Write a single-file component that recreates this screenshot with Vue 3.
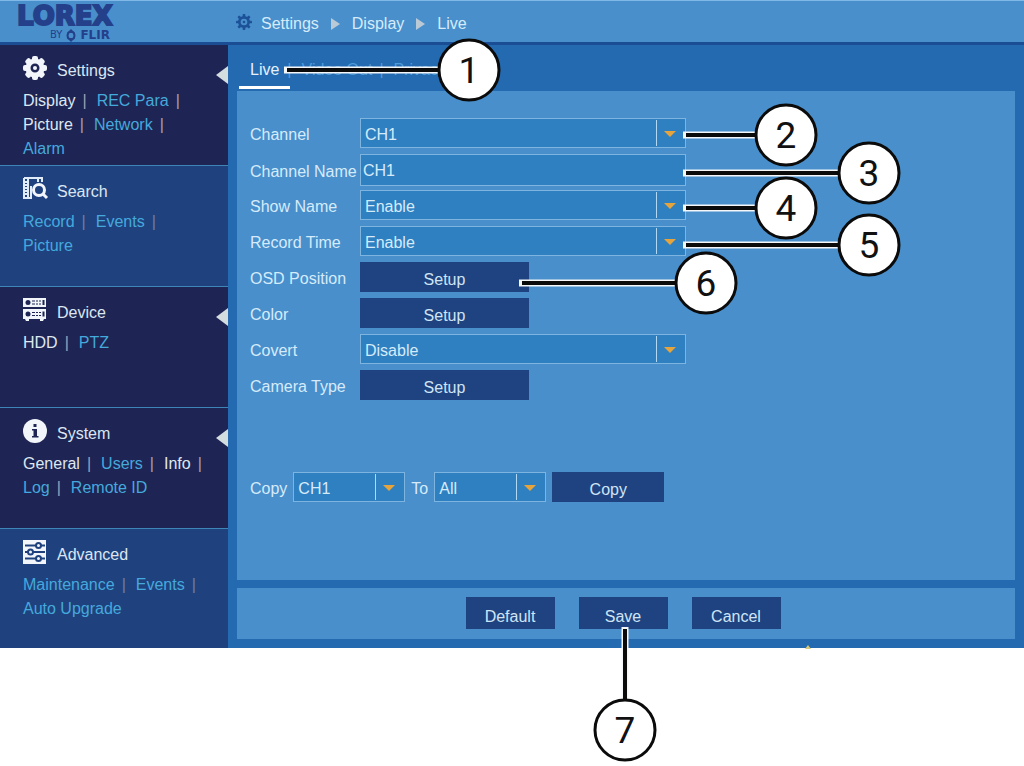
<script setup>
import { ref } from 'vue'

const sections = [
  {
    name: 'Settings', icon: 'gear', dark: true,
    links: [['Display', true], ['REC Para', false], ['Picture', true], ['Network', false], ['Alarm', false]],
  },
  { name: 'Search', icon: 'search', dark: false, links: [['Record', false], ['Events', false], ['Picture', false]] },
  { name: 'Device', icon: 'device', dark: true, links: [['HDD', true], ['PTZ', false]] },
  {
    name: 'System', icon: 'info', dark: true,
    links: [['General', true], ['Users', false], ['Info', true], ['Log', false], ['Remote ID', false]],
  },
  { name: 'Advanced', icon: 'sliders', dark: false, links: [['Maintenance', false], ['Events', false], ['Auto Upgrade', false]] },
]

const rows = [
  { id: 'channel', label: 'Channel', type: 'select', options: ['CH1', 'CH2', 'CH3', 'CH4'] },
  { id: 'channel-name', label: 'Channel Name', type: 'text' },
  { id: 'show-name', label: 'Show Name', type: 'select', options: ['Enable', 'Disable'] },
  { id: 'record-time', label: 'Record Time', type: 'select', options: ['Enable', 'Disable'] },
  { id: 'osd-position', label: 'OSD Position', type: 'button' },
  { id: 'color', label: 'Color', type: 'button' },
  { id: 'covert', label: 'Covert', type: 'select', options: ['Disable', 'Enable'] },
  { id: 'camera-type', label: 'Camera Type', type: 'button' },
]

const channelName = ref('CH1')
const teeth = [0, 45, 90, 135, 180, 225, 270, 315]

const callouts = [
  { n: 1, x: 469, y: 70, fx: 284, fy: 70 },
  { n: 2, x: 786, y: 135, fx: 683, fy: 135 },
  { n: 3, x: 869, y: 173, fx: 683, fy: 173 },
  { n: 4, x: 786, y: 208, fx: 683, fy: 208 },
  { n: 5, x: 869, y: 245, fx: 683, fy: 245 },
  { n: 6, x: 706, y: 283, fx: 519, fy: 283 },
  { n: 7, x: 625, y: 730, fx: 625, fy: 627 },
]
</script>

<template>
  <div class="figure">
    <div class="screen">
      <header class="topbar">
        <div class="brand">
          <div class="brand-name">LOREX</div>
          <div class="brand-sub">
            <span class="by">BY</span>
            <svg class="flir-mark" viewBox="0 0 10 13" aria-hidden="true">
              <path d="M5 0 9 4H1ZM5 13 1 9h8Z" />
              <path d="M3 3Q0 6.500 3 10M7 3q3 3.500 0 7" class="arc" />
            </svg>
            <span class="flir">FLIR</span>
          </div>
        </div>
        <nav class="crumbs" aria-label="Breadcrumb">
          <svg class="crumb-gear" viewBox="0 0 24 24" aria-hidden="true">
            <rect v-for="a in teeth" :key="a" x="10" y="0" width="4" height="6" rx="1" :transform="`rotate(${a} 12 12)`" />
            <circle cx="12" cy="12" r="7" class="ring" />
            <circle cx="12" cy="12" r="2" />
          </svg>
          <a href="#settings">Settings</a>
          <i class="crumb-arrow"></i>
          <a href="#display">Display</a>
          <i class="crumb-arrow"></i>
          <a href="#live">Live</a>
        </nav>
      </header>

      <div class="body">
        <aside class="sidebar">
          <section v-for="s in sections" :key="s.name" class="group" :class="{ dark: s.dark }">
            <h2 class="group-title">
              <svg class="group-icon" viewBox="0 0 24 24" aria-hidden="true">
                <g v-if="s.icon === 'gear'">
                  <rect v-for="a in teeth" :key="a" x="9" y="0" width="6" height="6" rx="2" :transform="`rotate(${a} 12 12)`" />
                  <circle cx="12" cy="12" r="7" class="gear-ring" />
                  <circle cx="12" cy="12" r="2" />
                </g>
                <g v-else-if="s.icon === 'search'">
                  <path class="line" d="M1 1h18v4M1 1v20h8M5 2v19M1 5h4M1 8h4M1 11h4M1 14h4M1 17h4M15 2v3" />
                  <path class="line" d="M8 20v-11" />
                  <circle cx="16" cy="13" r="5.500" class="lens" />
                  <path class="handle" d="m20 17 4 4" />
                </g>
                <g v-else-if="s.icon === 'device'">
                  <path d="M0 0h23v9H0ZM0 11h23v10H0ZM2 21h4v2H3ZM17 21h4l-1 2h-3Z" />
                  <circle cx="5" cy="4.500" r="2.500" class="hole" />
                  <circle cx="5" cy="16" r="2.500" class="hole" />
                  <path class="cut" d="M9 3h3m1 0h2m1 0h2M9 6h3m1 0h2m1 0h2M9 14.500h3m1 0h2m1 0h2M9 17.500h3m1 0h2m1 0h2" />
                  <path class="slider" d="M20.500 2v5M20.500 13.500v5" />
                </g>
                <g v-else-if="s.icon === 'info'">
                  <circle cx="12" cy="12" r="12" />
                  <path class="hole" d="M10.500 5h3v3h-3ZM9 10h5v7h1.500v1.500H9V17h1.500v-5.500H9Z" />
                </g>
                <g v-else>
                  <path d="M0 0h23v24H0Z" />
                  <path class="slider" d="M2 5.500h11M18 5.500h4M2 12h3M10 12h12M2 18.500h11M18 18.500h4" />
                  <circle cx="15.500" cy="5.500" r="2.500" class="slider" />
                  <circle cx="7.500" cy="12" r="2.500" class="slider" />
                  <circle cx="15.500" cy="18.500" r="2.500" class="slider" />
                </g>
              </svg>
              {{ s.name }}
            </h2>
            <ul class="links">
              <li v-for="([text, on], i) in s.links" :key="text">
                <a href="#" :class="{ on }">{{ text }}</a>
                <span v-if="i < s.links.length - 1" class="bar">|</span>
              </li>
            </ul>
            <i v-if="s.dark" class="pointer"></i>
          </section>
        </aside>

        <main class="content">
          <nav class="tabs" aria-label="Tabs">
            <a href="#live" class="tab current">Live</a>
            <span class="tab-bar">|</span>
            <a href="#video-out" class="tab">Video Out</a>
            <span class="tab-bar">|</span>
            <a href="#privacy" class="tab">Privacy</a>
          </nav>

          <form class="panel" @submit.prevent>
            <div v-for="r in rows" :key="r.id" class="row">
              <label :for="r.id">{{ r.label }}</label>
              <span v-if="r.type === 'select'" class="drop">
                <select :id="r.id">
                  <option v-for="o in r.options" :key="o">{{ o }}</option>
                </select>
              </span>
              <input v-else-if="r.type === 'text'" :id="r.id" v-model="channelName" type="text" />
              <button v-else :id="r.id" type="button" class="btn setup">Setup</button>
            </div>

            <div class="copy-row">
              <label for="copy-from">Copy</label>
              <span class="drop small">
                <select id="copy-from"><option>CH1</option><option>CH2</option></select>
              </span>
              <label for="copy-to">To</label>
              <span class="drop small">
                <select id="copy-to"><option>All</option><option>CH2</option></select>
              </span>
              <button type="button" class="btn copy">Copy</button>
            </div>
          </form>

          <footer class="actions">
            <button type="button" class="btn action">Default</button>
            <button type="button" class="btn action">Save</button>
            <button type="button" class="btn action">Cancel</button>
          </footer>
        </main>
      </div>
    </div>

    <svg class="callouts" width="1024" height="766" viewBox="0 0 1024 766">
      <path d="M805 649 808 645 811 649Z" class="tip" />
      <g v-for="c in callouts" :key="c.n">
        <line :x1="c.fx" :y1="c.fy" :x2="c.x" :y2="c.y" class="halo" />
        <line :x1="c.n === 7 ? c.fx : c.fx + 3" :y1="c.n === 7 ? c.fy + 2 : c.fy" :x2="c.x" :y2="c.y" class="lead" />
        <circle :cx="c.x" :cy="c.y" r="30" />
        <text :x="c.x" :y="c.y + 13">{{ c.n }}</text>
      </g>
    </svg>
  </div>
</template>

<style>
body {
  margin: 0;
  background: #fff;
}
</style>

<style scoped>
.figure {
  position: relative;
  min-height: 100vh;
  overflow: hidden;
  font: 16px/24px "Liberation Sans", Arial, sans-serif;
  color: #d6ebfa;
}
a {
  color: inherit;
  text-decoration: none;
}
.screen {
  background: #246ab1;
}
.topbar {
  display: flex;
  box-sizing: border-box;
  height: 45px;
  border-top: 1px solid #80b9e8;
  border-bottom: 3px solid #1b4d94;
  background: #488fcc;
}
.brand {
  width: 219px;
  padding: 3px 0 0 17px;
  box-sizing: content-box;
  color: #24408a;
  font-family: "DejaVu Sans", sans-serif;
}
.brand-name {
  font-size: 26px;
  line-height: 24px;
  font-weight: 700;
  -webkit-text-stroke: 2px #24408a;
}
.brand-sub {
  display: flex;
  align-items: center;
  gap: 4px;
  padding-left: 33px;
  height: 14px;
  line-height: 12px;
}
.by {
  font-size: 10px;
}
.flir {
  font-size: 12px;
  font-weight: 700;
}
.flir-mark {
  width: 10px;
  height: 13px;
  fill: #24408a;
}
.arc {
  fill: none;
  stroke: #24408a;
  stroke-width: 2;
}
.crumbs {
  display: flex;
  align-items: center;
  gap: 12px;
  padding-top: 5px;
}
.crumb-gear {
  width: 16px;
  height: 16px;
  margin: 0 -3px 4px 0;
  fill: #1d5299;
}
.ring {
  fill: none;
  stroke: #1d5299;
  stroke-width: 4;
}
.crumb-arrow {
  border-left: 9px solid #b9c9d6;
  border-top: 6px solid transparent;
  border-bottom: 6px solid transparent;
}
.body {
  display: flex;
}
.sidebar {
  flex: 0 0 228px;
}
.group {
  position: relative;
  box-sizing: border-box;
  min-height: 121px;
  padding: 11px 20px 0 23px;
  border-bottom: 1px solid #3f86b8;
  background: #1f427f;
  --back: #1f427f;
}
.group:last-child {
  min-height: 119px;
  border-bottom: 0;
}
.group.dark {
  background: #1e2554;
  --back: #1e2554;
}
.group-title {
  display: flex;
  gap: 10px;
  height: 28px;
  margin: 0 0 4px;
  font-size: 16px;
  line-height: 30px;
  font-weight: 400;
  color: #dce6f2;
}
.group-icon {
  width: 24px;
  height: 24px;
  fill: #f2f6fb;
  overflow: visible;
}
.gear-ring {
  fill: none;
  stroke: #f2f6fb;
  stroke-width: 5;
}
.line {
  fill: none;
  stroke: #dfebf6;
  stroke-width: 2;
}
.lens {
  fill: var(--back);
  stroke: #f2f6fb;
  stroke-width: 3;
}
.handle {
  stroke: #f2f6fb;
  stroke-width: 3;
}
.hole {
  fill: var(--back);
}
.cut,
.slider {
  fill: none;
  stroke: var(--back);
  stroke-width: 2;
}
.cut {
  stroke-width: 1;
}
.links {
  display: flex;
  flex-wrap: wrap;
  column-gap: 10px;
  margin: 0;
  padding: 1px 0 0;
  list-style: none;
}
.group:first-child .links {
  margin-bottom: -1px;
}
.links li {
  display: flex;
  gap: 7px;
}
.links a {
  color: #45a9dc;
}
.links a.on {
  color: #dfe7f1;
}
.bar {
  color: #6f7f9c;
}
.dark .bar {
  color: #a39fb4;
}
.pointer {
  position: absolute;
  top: 21px;
  right: 0;
  border-right: 12px solid #d3dcdf;
  border-top: 9px solid transparent;
  border-bottom: 9px solid transparent;
}
.content {
  flex: 1;
  display: flex;
  flex-direction: column;
  padding: 0 9px 9px;
}
.tabs {
  display: flex;
  align-items: flex-end;
  height: 46px;
  line-height: 24px;
  color: #4b9bd8;
}
.tab {
  padding-bottom: 9px;
}
.tab.current {
  margin: 0 0 2px 2px;
  padding: 0 11px 4px;
  border-bottom: 3px solid #fff;
  color: #e3f1fc;
}
.tab-bar {
  padding: 0 10px 9px 7px;
}
.tab.current + .tab-bar {
  padding-left: 0;
  margin-left: -3px;
}
.panel {
  flex: 1;
  padding: 27px 13px 0;
  background: #488fcc;
}
.row {
  display: grid;
  grid-template-columns: 110px minmax(0, 326px);
  align-items: center;
  height: 30px;
  margin-bottom: 6px;
}
.row label {
  padding-top: 3px;
  white-space: nowrap;
}
.drop {
  position: relative;
  display: block;
  height: 30px;
}
.drop.small {
  width: 112px;
}
.drop::before {
  content: "";
  position: absolute;
  top: 2px;
  bottom: 2px;
  right: 29px;
  width: 1px;
  background: #b3d8f4;
}
.drop::after {
  content: "";
  position: absolute;
  top: 13px;
  right: 10px;
  border-top: 6px solid #e5a43c;
  border-left: 6px solid transparent;
  border-right: 6px solid transparent;
  pointer-events: none;
}
select,
input {
  box-sizing: border-box;
  display: block;
  width: 100%;
  height: 30px;
  margin: 0;
  padding: 3px 4px 0;
  border: 1px solid #7db5e0;
  border-radius: 0;
  background: #2e80c1;
  color: #d6ebfa;
  font: inherit;
  appearance: none;
}
input {
  height: 32px;
  padding: 2px 2px 0;
}
.btn {
  height: 30px;
  padding: 5px 0 0;
  border: 0;
  background: #1f4380;
  color: #cfe5f6;
  font: inherit;
  line-height: 24px;
}
.setup {
  width: 169px;
}
.copy-row {
  display: flex;
  align-items: center;
  gap: 6px;
  margin: 72px 0 78px;
}
.copy-row label {
  padding-top: 3px;
}
.copy {
  width: 112px;
}
.actions {
  display: flex;
  justify-content: center;
  gap: 24px;
  margin-top: 8px;
  padding: 9px 6px 10px 0;
  background: #488fcc;
}
.action {
  width: 89px;
  height: 32px;
  padding-top: 7px;
}
.callouts {
  position: absolute;
  top: 0;
  left: 0;
  pointer-events: none;
}
.callouts .tip {
  fill: #d9c877;
}
.callouts .halo {
  stroke: #f4f6f8;
  stroke-width: 7;
}
.callouts .lead {
  stroke: #0b0b0b;
  stroke-width: 4;
}
.callouts circle {
  fill: #fff;
  stroke: #0b0b0b;
  stroke-width: 3;
}
.callouts text {
  fill: #111;
  font: 37px Roboto, sans-serif;
  text-anchor: middle;
}
</style>
